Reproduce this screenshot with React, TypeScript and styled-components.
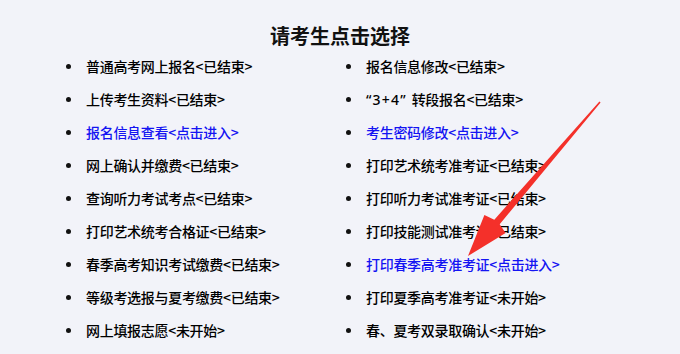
import styled, { createGlobalStyle } from "styled-components";

const GlobalStyle = createGlobalStyle`
  html, body {
    margin: 0;
    padding: 0;
    background: #f2f3f9;
  }
  body {
    font-family: "Noto Sans CJK SC", "Noto Sans", sans-serif;
    color: #000;
  }
`;

const Page = styled.div`
  position: relative;
  width: 680px;
  height: 354px;
  overflow: hidden;
  background: #f2f3f9;
`;

const Title = styled.h1`
  margin: 22px 0 0;
  text-align: center;
  font-size: 20px;
  font-weight: 700;
  line-height: 28px;
  color: #111;
`;

const List = styled.ul`
  list-style: none;
  margin: 0;
  padding: 0 0 0 60px;
  display: grid;
  grid-template-columns: 280px 280px;
  grid-auto-flow: column;
  grid-template-rows: repeat(9, 33px);
`;

const Item = styled.li<{ $link?: boolean }>`
  display: flex;
  align-items: center;
  padding-left: 6px;
  gap: 15px;
  font-size: 14px;
  font-weight: 500;
  letter-spacing: -0.3px;
  line-height: 33px;
  color: ${p => (p.$link ? "#1414f2" : "#000")};
  white-space: nowrap;
`;

const Dot = styled.span`
  width: 5px;
  height: 5px;
  border-radius: 50%;
  background: #111;
  flex: none;
`;

// the "3+4" quotes are proportional in the original, not full width
const Latin = styled.span`
  font-family: "Noto Sans", sans-serif;
  letter-spacing: 1.2px;
`;

const Arrow = styled.svg`
  position: absolute;
  left: 0;
  top: 0;
  pointer-events: none;
`;

type Entry = { t: React.ReactNode; link?: boolean };

const left: Entry[] = [
  { t: "普通高考网上报名<已结束>" },
  { t: "上传考生资料<已结束>" },
  { t: "报名信息查看<点击进入>", link: true },
  { t: "网上确认并缴费<已结束>" },
  { t: "查询听力考试考点<已结束>" },
  { t: "打印艺术统考合格证<已结束>" },
  { t: "春季高考知识考试缴费<已结束>" },
  { t: "等级考选报与夏考缴费<已结束>" },
  { t: "网上填报志愿<未开始>" },
];

const right: Entry[] = [
  { t: "报名信息修改<已结束>" },
  { t: <><Latin>“3+4” </Latin>转段报名&lt;已结束&gt;</> },
  { t: "考生密码修改<点击进入>", link: true },
  { t: "打印艺术统考准考证<已结束>" },
  { t: "打印听力考试准考证<已结束>" },
  { t: "打印技能测试准考证<已结束>" },
  { t: "打印春季高考准考证<点击进入>", link: true },
  { t: "打印夏季高考准考证<未开始>" },
  { t: "春、夏考双录取确认<未开始>" },
];

export default function App() {
  const items = [...left, ...right];
  return (
    <Page>
      <GlobalStyle />
      <Title>请考生点击选择</Title>
      <List>
        {items.map((it, i) => (
          <Item key={i} $link={it.link}>
            <Dot />
            <span>{it.t}</span>
          </Item>
        ))}
      </List>
      <Arrow width="680" height="354" viewBox="0 0 680 354">
        <polygon
          fill="#f4302a"
          points="600.6,102.5 499.7,224.3 505.6,233.1 468,256 484.4,214.9 494.3,219.7 599.4,101.5"
        />
      </Arrow>
    </Page>
  );
}
